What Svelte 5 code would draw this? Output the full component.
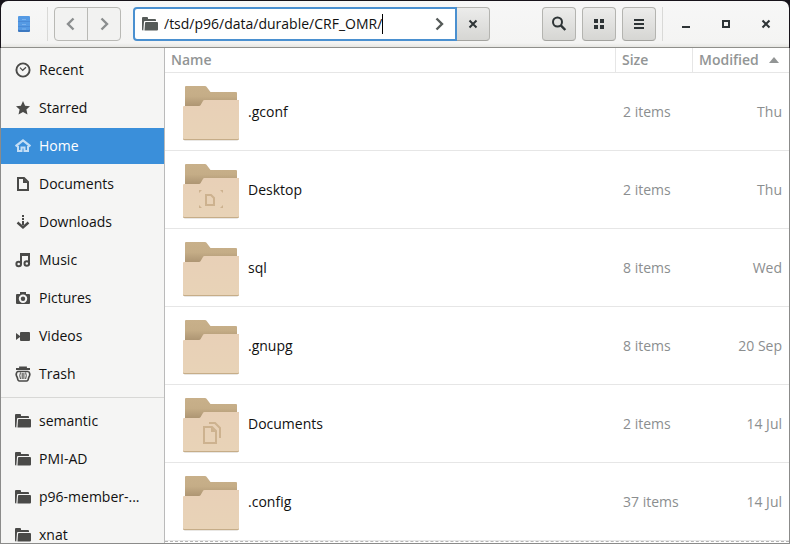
<script>
  const places = [
    { label: 'Recent', icon: 'recent' },
    { label: 'Starred', icon: 'star' },
    { label: 'Home', icon: 'home' },
    { label: 'Documents', icon: 'document' },
    { label: 'Downloads', icon: 'download' },
    { label: 'Music', icon: 'music' },
    { label: 'Pictures', icon: 'camera' },
    { label: 'Videos', icon: 'video' },
    { label: 'Trash', icon: 'trash' }
  ];
  const bookmarks = ['semantic', 'PMI-AD', 'p96-member-...', 'xnat'];
  const files = [
    { name: '.gconf', size: '2 items', modified: 'Thu' },
    { name: 'Desktop', size: '2 items', modified: 'Thu', emblem: 'desktop' },
    { name: 'sql', size: '8 items', modified: 'Wed' },
    { name: '.gnupg', size: '8 items', modified: '20 Sep' },
    { name: 'Documents', size: '2 items', modified: '14 Jul', emblem: 'documents' },
    { name: '.config', size: '37 items', modified: '14 Jul' }
  ];
  let current = $state('Home');
  let path = $state('/tsd/p96/data/durable/CRF_OMR/');
</script>

{#snippet icon(name)}
  <svg class="icon" viewBox="0 0 16 16" width="16" height="16" aria-hidden="true" fill="currentColor">
    {#if name === 'recent'}
      <circle cx="8" cy="8" r="6.6" fill="none" stroke="currentColor" stroke-width="1.9" />
      <path d="M5 5.6 7.7 8.3 11 5.2" fill="none" stroke="currentColor" stroke-width="1.2" />
    {:else if name === 'star'}
      <path d="M8 1l2.1 4.7 4.9.5-3.6 3.3 1.1 5L8 12l-4.500 2.500 1.100-5L1 6.200l4.900-.5z" />
    {:else if name === 'home'}
      <path d="M.6 8.300 8 2.300l7.400 6" fill="none" stroke="currentColor" stroke-width="2.200" />
      <path d="M3 8v5h3.500V9.500h3V13H13V8" fill="none" stroke="currentColor" stroke-width="2" />
    {:else if name === 'document'}
      <path d="M3 2h6l4 4v8H3z" fill="none" stroke="currentColor" stroke-width="2" />
      <path d="M8 2v5h5z" />
    {:else if name === 'download'}
      <path d="M7 1h2v2H7zM7 4h2v2H7zM7 7h2v4H7z" />
      <path d="M2.500 8.500 8 13.500l5.500-5" fill="none" stroke="currentColor" stroke-width="2.400" />
    {:else if name === 'music'}
      <path d="M6 12V2h8v9.500" fill="none" stroke="currentColor" stroke-width="2" />
      <path d="M5 2h10v2H5z" />
      <circle cx="3.700" cy="12" r="2.300" fill="none" stroke="currentColor" stroke-width="2" />
      <circle cx="11.800" cy="11.500" r="2.300" fill="none" stroke="currentColor" stroke-width="2" />
    {:else if name === 'camera'}
      <path fill-rule="evenodd" d="M5 2h6v2h3q1 0 1 1v8q0 1-1 1H2q-1 0-1-1V5q0-1 1-1h3zM8 4.500a4.200 4.200 0 1 0 0 8.400 4.200 4.200 0 0 0 0-8.400z" />
      <circle cx="8" cy="8.700" r="2.200" />
    {:else if name === 'video'}
      <path d="M6 4h8q1 0 1 1v7q0 1-1 1H6q-1 0-1-1V9l-4 3V5l4 3V5q0-1 1-1z" />
    {:else if name === 'trash'}
      <path d="M1 3h14M5 3V1.300h6V3" fill="none" stroke="currentColor" stroke-width="1.800" />
      <path d="M2.500 5.500h11M2.500 5.500Q0 8 2.300 11.500 2.800 15 4.500 15h7q1.700 0 2.200-3.500Q16 8 13.500 5.500" fill="none" stroke="currentColor" stroke-width="1.700" />
      <path d="M5.500 6.500Q4 9.500 5.500 13M7.200 7v6M8.900 7v6M10.600 6.500Q12 9.500 10.600 13" fill="none" stroke="currentColor" />
    {:else if name === 'folder'}
      <path d="M1 1h4q1 0 1 1v1h7q1 0 1 1v1H3q-1 0-1 1l-.7 8.500H1q-1 0-1-1V2q0-1 1-1z" />
      <path d="M4 6h11q1 0 1 1v6.500q0 1-1 1H2.500L3 7q0-1 1-1z" />
    {:else if name === 'back'}
      <path d="M10.500 2.500 5 8l5.500 5.500" fill="none" stroke="currentColor" stroke-width="2.400" />
    {:else if name === 'forward'}
      <path d="M5.500 2.500 11 8l-5.500 5.500" fill="none" stroke="currentColor" stroke-width="2.400" />
    {:else if name === 'close'}
      <path d="M4.500 4.500l7 7M11.500 4.500l-7 7" fill="none" stroke="currentColor" stroke-width="2" />
    {:else if name === 'search'}
      <circle cx="6.500" cy="6" r="4.500" fill="none" stroke="currentColor" stroke-width="2" />
      <path d="M9.800 9.300 14.300 14" fill="none" stroke="currentColor" stroke-width="2.400" />
    {:else if name === 'grid'}
      <path d="M3 3h4v4H3zM9 3h4v4H9zM3 9h4v4H3zM9 9h4v4H9z" />
    {:else if name === 'menu'}
      <path d="M3 3h10v2H3zM3 7h10v2H3zM3 11h10v2H3z" />
    {:else if name === 'minimize'}
      <path d="M4 10h8v2H4z" />
    {:else if name === 'maximize'}
      <path d="M5 5h6v6H5z" fill="none" stroke="currentColor" stroke-width="2" />
    {/if}
  </svg>
{/snippet}

{#snippet folder(emblem)}
  <svg class="folder" viewBox="0 0 56 58" width="56" height="58" aria-hidden="true">
    <defs>
      <linearGradient id="back" x1="0" y1="0" x2="0" y2="1">
        <stop offset="0" stop-color="#c8b08a" />
        <stop offset=".2" stop-color="#c5ad87" />
        <stop offset=".42" stop-color="#aa9270" />
      </linearGradient>
      <linearGradient id="front" x1="0" y1="0" x2="0" y2="1">
        <stop offset="0" stop-color="#e8d0b7" />
        <stop offset="1" stop-color="#e8d3b7" />
      </linearGradient>
    </defs>
    <g transform="translate(0 2)">
      <path d="M1 53h54v2q0 1-1 1H2q-1 0-1-1z" fill="#e9e7e4" />
      <path d="M3 1h19q1 0 1.500.7L27.500 7H53q1 0 1 1v44H2V2q0-1 1-1z" fill="url(#back)" />
      <path d="M1 22h15q1 0 1.500-.7L20 16q.5-1 1.500-1H55q1 0 1 1v38q0 1-1 1H1q-1 0-1-1V23q0-1 1-1z" fill="#c6ad88" />
      <path d="M1 21h15q1 0 1.500-.7L20 16q.5-1 1.500-1H55q1 0 1 1v37q0 1-1 1H1q-1 0-1-1V22q0-1 1-1z" fill="url(#front)" />
      {#if emblem === 'desktop'}
        <path d="M23 32h5l3 3v7h-8z" fill="none" stroke="#cdb28f" stroke-width="2" />
        <path d="M16 27h3l-3 3zM40 27h-3l3 3zM16 45h3l-3-3zM40 45h-3l3-3z" fill="#cdb28f" />
      {:else if emblem === 'documents'}
        <path d="M21 30h8l4 4v12H21z" fill="none" stroke="#cdb28f" stroke-width="2" />
        <path d="M28 30v5h5z" fill="#cdb28f" />
        <path d="M26 26h6l5 5v10" fill="none" stroke="#cdb28f" stroke-width="2" />
      {/if}
    </g>
  </svg>
{/snippet}

<div class="window">
  <header>
    <svg class="app" viewBox="0 0 12 16" width="12" height="16" aria-hidden="true">
      <rect width="12" height="15" y="1" rx="1" fill="#3c78c0" />
      <rect width="12" height="14" rx="1" fill="#559ae4" />
      <path d="M0 5.500h12M0 10.500h12" stroke="#4a8ad6" />
      <path d="M4 3.500h4M4 8.500h4M4 13h4" stroke="#7ab2ee" />
    </svg>
    <span class="rule"></span>
    <div class="nav">
      <button aria-label="Back">{@render icon('back')}</button>
      <button aria-label="Forward">{@render icon('forward')}</button>
    </div>
    <div class="location">
      <label class="entry">
        {@render icon('folder')}
        <input type="text" aria-label="Location" spellcheck="false" bind:value={path} />
        <span class="caret"></span>
        <span class="go">{@render icon('forward')}</span>
      </label>
      <button class="raised clear" aria-label="Close location">{@render icon('close')}</button>
    </div>
    <div class="tools">
      <button class="raised" aria-label="Search">{@render icon('search')}</button>
      <button class="raised" aria-label="Icon view">{@render icon('grid')}</button>
      <button class="raised" aria-label="Menu">{@render icon('menu')}</button>
    </div>
    <span class="rule"></span>
    <div class="controls">
      <button aria-label="Minimize">{@render icon('minimize')}</button>
      <button aria-label="Maximize">{@render icon('maximize')}</button>
      <button aria-label="Close">{@render icon('close')}</button>
    </div>
  </header>

  <div class="body">
    <nav>
      <div class="group">
        {#each places as p}
          <a href="#{p.icon}" class:selected={current === p.label} onclick={() => (current = p.label)}>
            {@render icon(p.icon)}<span>{p.label}</span>
          </a>
        {/each}
      </div>
      <div class="group">
        {#each bookmarks as b}
          <a href="#{b}" class:selected={current === b} onclick={() => (current = b)}>
            {@render icon('folder')}<span>{b}</span>
          </a>
        {/each}
      </div>
    </nav>

    <main>
      <table>
        <thead>
          <tr>
            <th class="name">Name</th>
            <th class="size">Size</th>
            <th class="modified" aria-sort="ascending">
              <div>Modified
                <svg viewBox="0 0 10 6" width="10" height="6" aria-hidden="true"><path d="M0 6 5 0l5 6z" fill="#929595" /></svg>
              </div>
            </th>
          </tr>
        </thead>
        <tbody>
          {#each files as f}
            <tr>
              <td><div class="file">{@render folder(f.emblem)}<span>{f.name}</span></div></td>
              <td class="size">{f.size}</td>
              <td class="modified">{f.modified}</td>
            </tr>
          {/each}
        </tbody>
      </table>
      <div class="more"></div>
    </main>
  </div>
</div>

<style>
  :global(body) {
    margin: 0;
    background: #17131a;
  }
  .window {
    box-sizing: border-box;
    height: 100vh;
    padding-top: 1px;
    display: flex;
    flex-direction: column;
    overflow: hidden;
    font: 14px/20px 'Open Sans', 'Noto Sans', sans-serif;
    color: #1a1c1c;
  }
  svg {
    display: block;
    flex: none;
  }
  button {
    box-sizing: border-box;
    display: flex;
    align-items: center;
    justify-content: center;
    width: 34px;
    height: 34px;
    padding: 0;
    border: 0;
    background: none;
    color: #2e3436;
  }
  header {
    box-sizing: border-box;
    flex: none;
    display: flex;
    align-items: center;
    height: 47px;
    margin: 0 1px;
    padding: 0 6px 0 17px;
    border-bottom: 1px solid #8f8f8b;
    border-radius: 7px 7px 0 0;
    background: linear-gradient(#f7f7f7, #f4f4f3 42px, #e6e6e2);
  }
  .rule {
    width: 1px;
    height: 34px;
    background: #d9d9d7;
  }
  .app + .rule {
    margin: 0 6px 0 17px;
  }
  .nav {
    display: flex;
    border: 1px solid #b9b9b5;
    border-radius: 4px;
    background: #f2f2f1;
  }
  .nav button {
    width: 32px;
    height: 32px;
    color: #8b8e8f;
  }
  .nav button:first-child {
    width: 33px;
    border-right: 1px solid #b9b9b5;
  }
  .location {
    display: flex;
    flex: 0 1 357px;
    min-width: 0;
    margin-left: 12px;
  }
  .entry {
    box-sizing: border-box;
    flex: 1;
    min-width: 0;
    height: 34px;
    display: flex;
    align-items: center;
    padding: 0 8px 0 7px;
    border: 2px solid #4a90d0;
    border-radius: 4px 0 0 4px;
    background: #fff;
    color: #565b59;
  }
  input {
    field-sizing: content;
    min-width: 0;
    margin: 0 0 0 6px;
    padding: 0;
    border: 0;
    outline: 0;
    background: none;
    font: inherit;
    color: #111;
  }
  .caret {
    width: 1px;
    height: 20px;
    background: #000;
  }
  .go {
    margin-left: auto;
  }
  .raised {
    border: 1px solid #b4b4b0;
    border-bottom-color: #a3a39f;
    border-radius: 4px;
    background: linear-gradient(#ececeb, #d6d6d3);
  }
  .clear {
    width: 33px;
    border-left: 0;
    border-radius: 0 4px 4px 0;
  }
  .tools {
    display: flex;
    gap: 6px;
    margin: 0 6px 0 auto;
  }
  .controls {
    display: flex;
    gap: 6px;
    margin-left: 6px;
  }
  .body {
    box-sizing: border-box;
    flex: 1;
    min-height: 0;
    display: flex;
    border: 1px solid #8b8b8a;
    border-top: 0;
    background: #fff;
  }
  nav {
    box-sizing: border-box;
    flex: none;
    width: 164px;
    overflow: hidden;
    border-right: 1px solid #bababa;
    background: #f5f5f4;
  }
  .group {
    display: flex;
    flex-direction: column;
    gap: 2px;
    padding: 4px 0 5px;
  }
  .group + .group {
    border-top: 1px solid #d8d8d6;
    padding-top: 5px;
  }
  nav a {
    display: flex;
    align-items: center;
    gap: 8px;
    height: 36px;
    padding-left: 14px;
    color: #4a4a48;
    text-decoration: none;
  }
  nav a span {
    color: #111;
  }
  nav a.selected {
    background: #3a8fda;
    color: #c4def5;
  }
  nav a.selected span {
    color: #fff;
  }
  main {
    flex: 1;
    min-width: 0;
    overflow: hidden;
  }
  table {
    width: 100%;
    table-layout: fixed;
    border-collapse: separate;
    border-spacing: 0;
  }
  th,
  td {
    box-sizing: border-box;
    padding: 0;
    border-bottom: 1px solid #e6e6e6;
    text-align: left;
  }
  th {
    height: 25px;
    padding: 0 6px;
    font-weight: 600;
    color: #929595;
  }
  th + th {
    border-left: 1px solid #e6e6e6;
  }
  th.size {
    width: 77px;
  }
  th.modified {
    width: 97px;
  }
  th.modified div {
    display: flex;
    align-items: center;
    justify-content: space-between;
    padding-right: 4px;
  }
  td {
    height: 78px;
    color: #8b8e8f;
  }
  td.size {
    padding-left: 8px;
  }
  td.modified {
    padding-right: 7px;
    text-align: right;
  }
  .file {
    display: flex;
    align-items: center;
    gap: 9px;
    padding-left: 18px;
    color: #111;
  }
  .more {
    border-top: 1px dashed #b5b5b5;
  }
</style>
